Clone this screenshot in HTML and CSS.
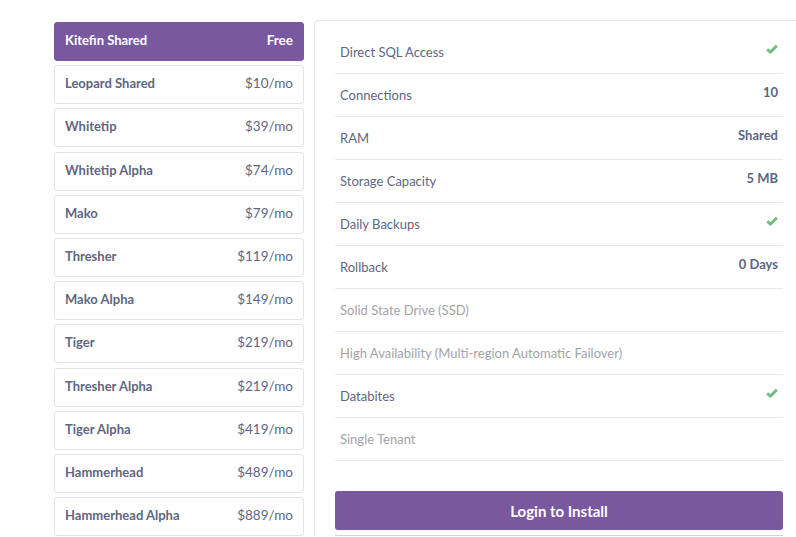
FILE: index.html
```html
<!DOCTYPE html>
<html>
<head>
<meta charset="utf-8">
<link rel="stylesheet" href="styles.css">
</head>
<body>
<div class="page">
  <ul class="plans">
    <li class="plan active"><span class="name">Kitefin Shared</span><span class="price">Free</span></li>
    <li class="plan"><span class="name">Leopard Shared</span><span class="price">$10/mo</span></li>
    <li class="plan"><span class="name">Whitetip</span><span class="price">$39/mo</span></li>
    <li class="plan"><span class="name">Whitetip Alpha</span><span class="price">$74/mo</span></li>
    <li class="plan"><span class="name">Mako</span><span class="price">$79/mo</span></li>
    <li class="plan"><span class="name">Thresher</span><span class="price">$119/mo</span></li>
    <li class="plan"><span class="name">Mako Alpha</span><span class="price">$149/mo</span></li>
    <li class="plan"><span class="name">Tiger</span><span class="price">$219/mo</span></li>
    <li class="plan"><span class="name">Thresher Alpha</span><span class="price">$219/mo</span></li>
    <li class="plan"><span class="name">Tiger Alpha</span><span class="price">$419/mo</span></li>
    <li class="plan"><span class="name">Hammerhead</span><span class="price">$489/mo</span></li>
    <li class="plan"><span class="name">Hammerhead Alpha</span><span class="price">$889/mo</span></li>
  </ul>
  <div class="details">
    <ul class="features">
      <li class="feature"><span class="label">Direct SQL Access</span><span class="value"><svg class="check" viewBox="0 0 12 10" width="12" height="10"><path d="M1.2 5.2 L4.4 8.2 L10.8 1.8" fill="none" stroke="#6cbd7c" stroke-width="2.8" stroke-linejoin="round"/></svg></span></li>
      <li class="feature"><span class="label">Connections</span><span class="value">10</span></li>
      <li class="feature"><span class="label">RAM</span><span class="value">Shared</span></li>
      <li class="feature"><span class="label">Storage Capacity</span><span class="value">5 MB</span></li>
      <li class="feature"><span class="label">Daily Backups</span><span class="value"><svg class="check" viewBox="0 0 12 10" width="12" height="10"><path d="M1.2 5.2 L4.4 8.2 L10.8 1.8" fill="none" stroke="#6cbd7c" stroke-width="2.8" stroke-linejoin="round"/></svg></span></li>
      <li class="feature"><span class="label">Rollback</span><span class="value">0 Days</span></li>
      <li class="feature off"><span class="label">Solid State Drive (SSD)</span></li>
      <li class="feature off"><span class="label">High Availability (Multi-region Automatic Failover)</span></li>
      <li class="feature"><span class="label">Databites</span><span class="value"><svg class="check" viewBox="0 0 12 10" width="12" height="10"><path d="M1.2 5.2 L4.4 8.2 L10.8 1.8" fill="none" stroke="#6cbd7c" stroke-width="2.8" stroke-linejoin="round"/></svg></span></li>
      <li class="feature off"><span class="label">Single Tenant</span></li>
    </ul>
    <button class="install">Login to Install</button>
    <div class="rule"></div>
  </div>
</div>
</body>
</html>
```
FILE: styles.css
```css
html, body {
  margin: 0;
  padding: 0;
  background: #fff;
  overflow: hidden;
}
body {
  font-family: Lato, "Liberation Sans", sans-serif;
  font-size: 13px;
  color: #596981;
}
.page {
  display: flex;
  align-items: flex-start;
  gap: 10px;
  padding: 20px 0 0 54px;
}
.plans {
  list-style: none;
  margin: 2px 0 0;
  padding: 0;
  width: 250px;
  display: flex;
  flex-direction: column;
  gap: 4.2px;
}
.plan {
  box-sizing: border-box;
  height: 39px;
  display: flex;
  justify-content: space-between;
  align-items: center;
  padding: 0 10px 3px;
  border: 1px solid #e3e3e6;
  border-radius: 3px;
  color: #61667f;
}
.plan .name {
  font-weight: 700;
}
.plan .price {
  font-weight: 400;
  font-size: 13.5px;
}
.plan.active {
  background: #79589f;
  border-color: #79589f;
  color: #fff;
}
.plan.active .price {
  font-weight: 700;
}
.details {
  box-sizing: border-box;
  width: 482px;
  border: 1px solid #e6e6e9;
  border-right: 0;
  border-bottom: 0;
  border-radius: 4px 0 0 0;
  padding: 10px 13px 0 20px;
}
.features {
  list-style: none;
  margin: 0;
  padding: 0;
}
.feature {
  box-sizing: border-box;
  height: 43px;
  display: flex;
  justify-content: space-between;
  align-items: flex-start;
  border-bottom: 1px solid #e8e8ea;
  padding: 0 5px;
}
.feature .label {
  padding-top: 13px;
  line-height: 16px;
  color: #61667f;
}
.feature.off .label {
  color: #a3a3a8;
}
.feature .value {
  padding-top: 10px;
  line-height: 16px;
  font-weight: 700;
  color: #61667f;
}
.check {
  display: block;
  margin-top: 3px;
}
.install {
  display: block;
  width: 100%;
  height: 39px;
  margin-top: 30px;
  border: 0;
  border-radius: 3px;
  background: #79589f;
  color: #fff;
  font-family: Lato, "Liberation Sans", sans-serif;
  font-size: 15px;
  font-weight: 700;
}
.rule {
  height: 1px;
  margin-top: 5px;
  background: #d3d3d7;
}
```
